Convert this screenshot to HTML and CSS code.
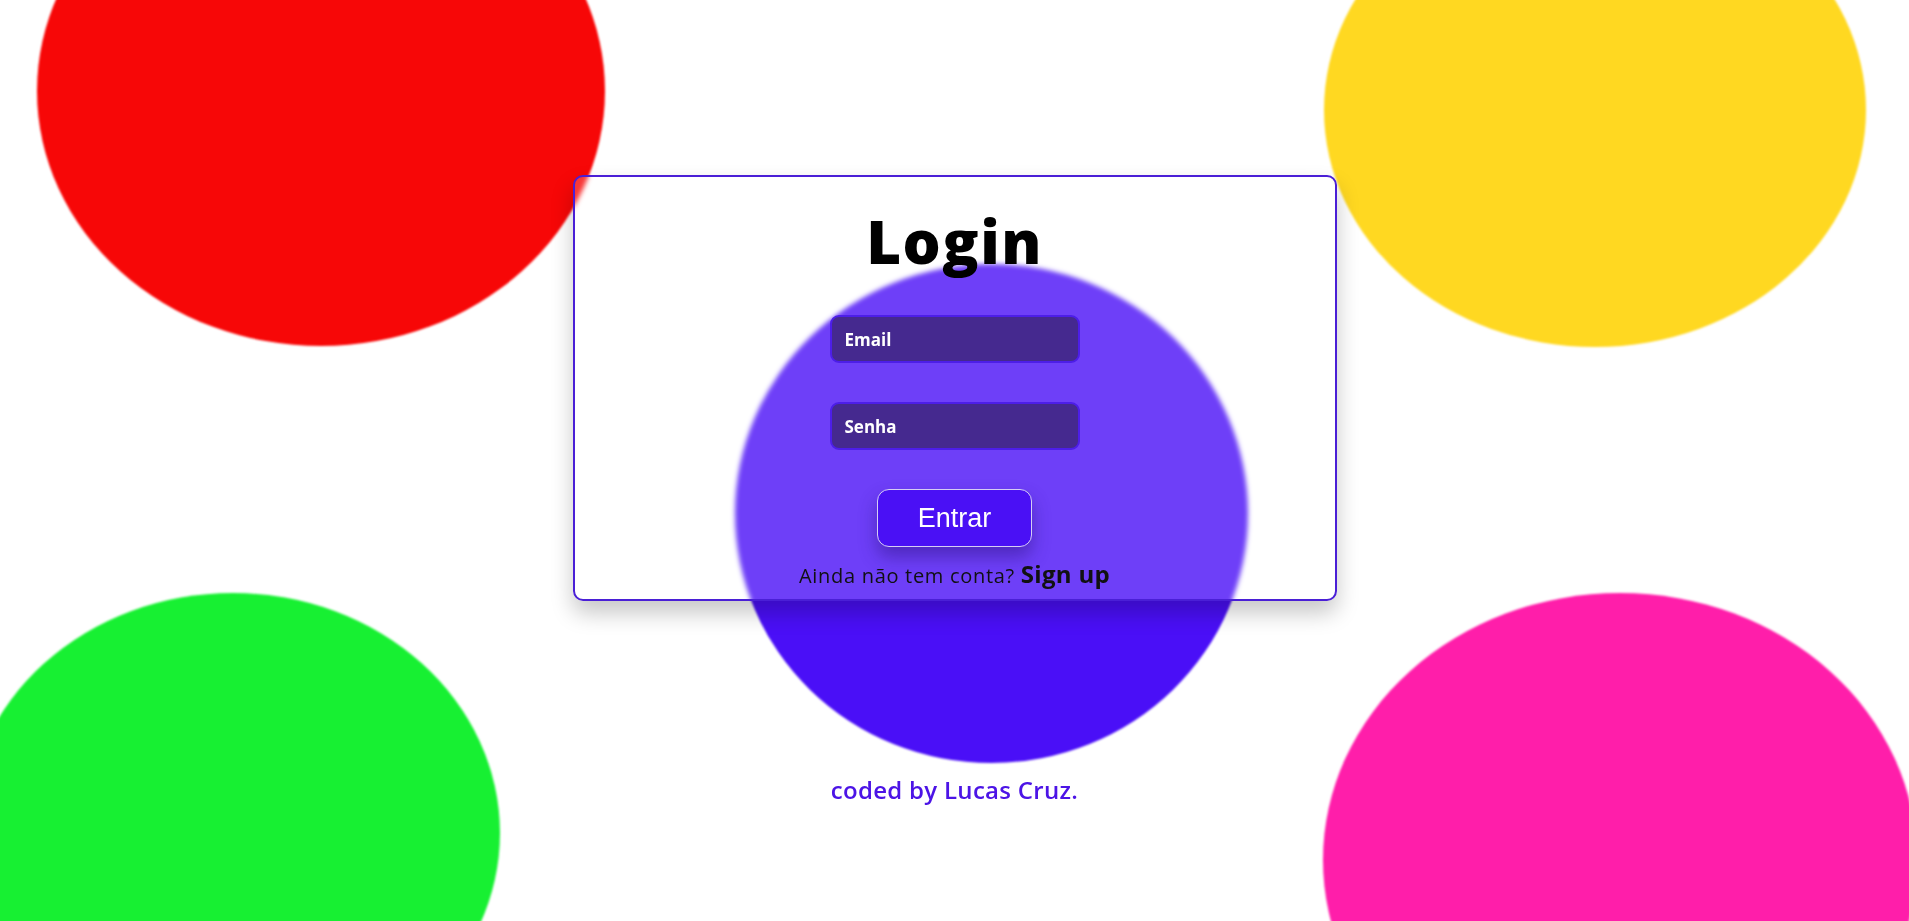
FILE: index.html
```html
<!DOCTYPE html>
<html lang="pt-BR">
<head>
<meta charset="utf-8">
<title>Login</title>
<link rel="stylesheet" href="styles.css">
</head>
<body>
<div class="backdrop">
  <div class="blob blob-red"></div>
  <div class="blob blob-yellow"></div>
  <div class="blob blob-green"></div>
  <div class="blob blob-pink"></div>
  <div class="blob blob-purple"></div>
</div>
<main class="page">
  <form class="card">
    <h1 class="title">Login</h1>
    <input class="field" type="text" placeholder="Email">
    <input class="field" type="password" placeholder="Senha">
    <button class="btn" type="button">Entrar</button>
    <p class="signup">Ainda não tem conta? <a class="signup-link" href="#">Sign up</a></p>
  </form>
  <p class="credit">coded by Lucas Cruz.</p>
</main>
</body>
</html>
```
FILE: styles.css
```css
* { box-sizing: border-box; }
html, body { margin: 0; padding: 0; height: 100%; overflow: hidden; }
body {
  background: #ffffff;
  font-family: "Open Sans", "Noto Sans", sans-serif;
  position: relative;
}
.backdrop {
  position: fixed;
  inset: 0;
  overflow: hidden;
}
.blob {
  position: absolute;
  border-radius: 50%;
  filter: blur(1px);
}
.blob-red { left: 37px; top: -164px; width: 568px; height: 510px; background: #f70707; }
.blob-yellow { left: 1324px; top: -127px; width: 542px; height: 474px; background: #ffd821; }
.blob-green { left: -34px; top: 593px; width: 534px; height: 480px; background: #17f032; }
.blob-pink { left: 1323px; top: 593px; width: 594px; height: 534px; background: #ff1eaa; }
.blob-purple { left: 735px; top: 264px; width: 513px; height: 499px; background: #4a0ff7; }

.page {
  position: relative;
  z-index: 1;
  display: flex;
  flex-direction: column;
  align-items: center;
  padding-top: 175px;
}
.card {
  width: 764px;
  height: 426px;
  border: 2px solid #4a1fd6;
  border-radius: 10px;
  background: rgba(255, 255, 255, 0.2);
  backdrop-filter: blur(2px);
  box-shadow: 0 12px 22px rgba(0, 0, 0, 0.22);
  display: flex;
  flex-direction: column;
  align-items: center;
  padding-top: 29px;
}
.title {
  margin: 0;
  font-size: 60px;
  font-weight: 800;
  line-height: 70px;
  color: #000;
  letter-spacing: 1.5px;
}
.field {
  margin-top: 39px;
  width: 250px;
  height: 48px;
  border: 2px solid #4d1ee8;
  border-radius: 9px;
  background: #45298f;
  color: #fff;
  font-family: inherit;
  font-size: 17px;
  font-weight: 700;
  padding: 0 13px;
  outline: none;
}
.field + .field { margin-top: 39px; }
.field::placeholder { color: #ffffff; opacity: 1; }
.btn {
  margin-top: 39px;
  width: 155px;
  height: 58px;
  border: 1px solid #d6cdf5;
  border-radius: 12px;
  background: #4a10f5;
  color: #fff;
  font-family: "Liberation Sans", Arial, sans-serif;
  font-size: 27px;
  box-shadow: 0 10px 18px rgba(20, 0, 80, 0.35);
}
.signup {
  margin: 10px 0 0;
  font-size: 20px;
  color: #111;
  letter-spacing: 0.7px;
}
.signup-link {
  font-size: 24px;
  font-weight: 700;
  letter-spacing: 0.3px;
  color: #111;
  text-decoration: none;
}
.credit {
  margin: 172px 0 0;
  font-size: 24px;
  font-weight: 600;
  letter-spacing: 0.3px;
  color: #4c14e6;
}
```
